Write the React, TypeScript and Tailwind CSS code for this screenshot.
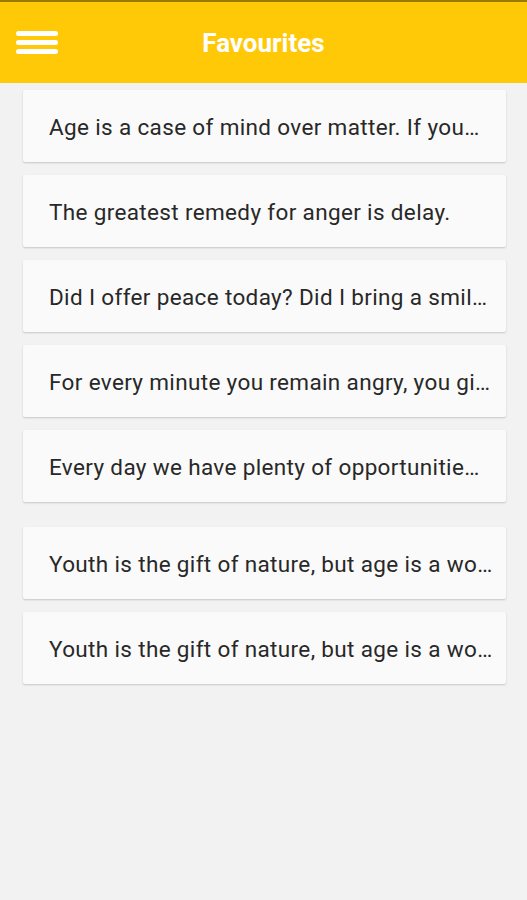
import React from "react";

const quotes = [
  "Age is a case of mind over matter. If you…",
  "The greatest remedy for anger is delay.",
  "Did I offer peace today? Did I bring a smil…",
  "For every minute you remain angry, you gi…",
  "Every day we have plenty of opportunitie…",
];
const quotes2 = [
  "Youth is the gift of nature, but age is a wo…",
  "Youth is the gift of nature, but age is a wo…",
];

function Card({ text }: { text: string }) {
  return (
    <div className="ml-[23px] mr-[21px] h-[72px] bg-[#fafafa] rounded-[2px] shadow-[0_1px_2px_rgba(0,0,0,0.18)] flex items-center pl-[26px] pr-[6px]">
      <div className="whitespace-nowrap text-[22.5px] tracking-[0.35px] text-[#282828] pt-[4px]" style={{ fontFamily: "Roboto, sans-serif" }}>
        {text}
      </div>
    </div>
  );
}

export default function App() {
  return (
    <div className="w-[527px] h-[900px] bg-[#f2f2f2] flex flex-col" style={{ fontFamily: "Roboto, sans-serif" }}>
      <div className="h-[2px] bg-[#9a7a00]" />
      <div className="h-[81px] bg-[#ffc908] relative flex items-center justify-center">
        <div className="absolute left-[16px] top-[29px] flex flex-col gap-[4px]">
          <div className="w-[42px] h-[5px] rounded-full bg-white" />
          <div className="w-[42px] h-[5px] rounded-full bg-white" />
          <div className="w-[42px] h-[5px] rounded-full bg-white" />
        </div>
        <div className="text-white font-bold text-[26px] pt-[1px]">Favourites</div>
      </div>
      <div className="flex flex-col gap-[13px] pt-[7px]">
        {quotes.map((q, i) => (
          <Card key={i} text={q} />
        ))}
      </div>
      <div className="flex flex-col gap-[13px] pt-[25px]">
        {quotes2.map((q, i) => (
          <Card key={i} text={q} />
        ))}
      </div>
    </div>
  );
}
